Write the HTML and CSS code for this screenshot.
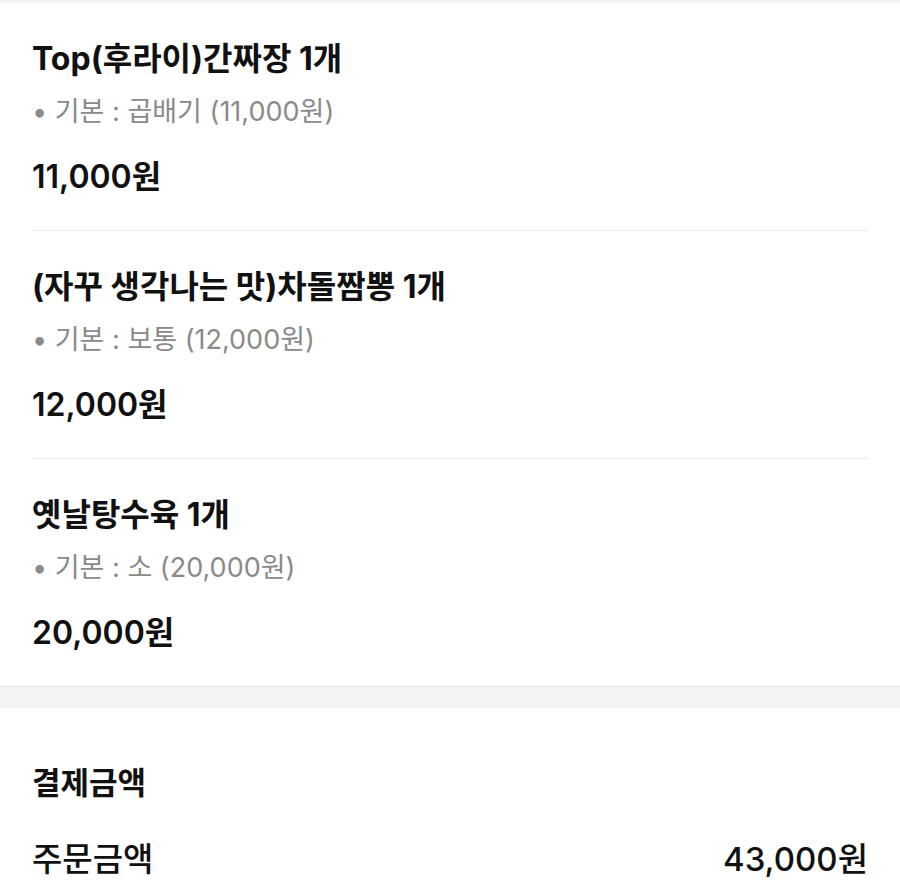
FILE: index.html
```html
<!DOCTYPE html>
<html lang="ko">
<head>
    <meta charset="UTF-8">
    <title>주문내역</title>
    <link rel="stylesheet" href="styles.css">
</head>
<body>
<div class="gap-top"></div>
<div class="card">
    <div class="item">
        <div class="item-title">Top(후라이)간짜장 1개</div>
        <div class="item-option">• 기본 : 곱배기 (11,000원)</div>
        <div class="item-price">11,000원</div>
    </div>
    <div class="item">
        <div class="item-title">(자꾸 생각나는 맛)차돌짬뽕 1개</div>
        <div class="item-option">• 기본 : 보통 (12,000원)</div>
        <div class="item-price">12,000원</div>
    </div>
    <div class="item">
        <div class="item-title">옛날탕수육 1개</div>
        <div class="item-option">• 기본 : 소 (20,000원)</div>
        <div class="item-price">20,000원</div>
    </div>
</div>
<div class="gap"></div>
<div class="pay">
    <div class="pay-title">결제금액</div>
    <div class="pay-row">
        <span>주문금액</span>
        <span>43,000원</span>
    </div>
</div>
</body>
</html>
```

FILE: styles.css
```css
*{
    margin:0;
    padding:0;
    box-sizing: border-box;
}
body{
    background: #fff;
    color: #111;
    font-family: Inter, "Noto Sans CJK KR", sans-serif;
}
.gap-top{
    height:3px;
    background: #f2f3f5;
}
.card{
    padding: 0 32px;
    border-bottom: 1px solid #e3e4e6;
}
.item{
    padding: 36px 0 33px;
    border-bottom: 1px solid #ededed;
}
.item:last-child{
    border-bottom: none;
}
.item-title{
    font-size: 32px;
    font-weight: 700;
    line-height: 40px;
}
.item-option{
    margin-top: 16px;
    font-size: 27px;
    line-height: 34px;
    color: #8a8a8a;
}
.item-price{
    margin-top: 28px;
    font-size: 32px;
    font-weight: 600;
    line-height: 40px;
}
.gap{
    height:21px;
    background: #f2f3f5;
}
.pay{
    padding: 55px 32px 0;
}
.pay-title{
    font-size: 31px;
    font-weight: 700;
    line-height: 40px;
}
.pay-row{
    margin-top: 36px;
    display: flex;
    justify-content: space-between;
    font-size: 33px;
    font-weight: 500;
    line-height: 40px;
}
```
